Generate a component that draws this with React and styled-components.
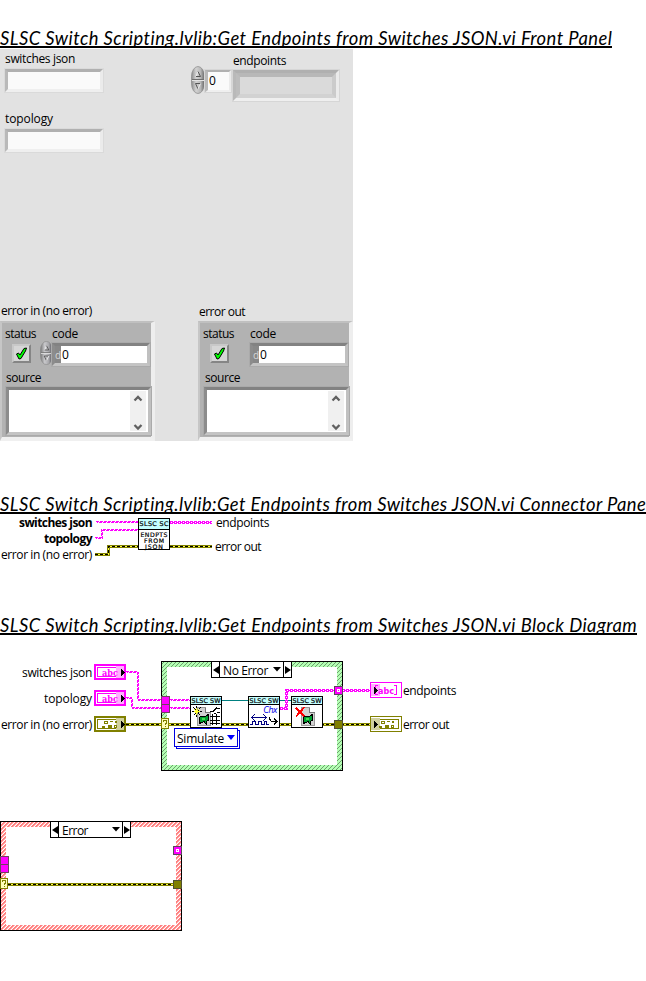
import React, { useLayoutEffect, useRef, useState } from "react";
import styled, { createGlobalStyle } from "styled-components";

const MAGENTA = "#ff00ff";
const OLIVE = "#808000";

const GlobalStyle = createGlobalStyle`
  * { box-sizing: border-box; }
  body { margin: 0; background: #fff; color: #000; }
`;

const Page = styled.main`
  width: 646px;
  height: 981px;
  overflow: hidden;
  background: #fff;
  font-family: "Open Sans", "Noto Sans", sans-serif;
  font-size: 12px;
  line-height: 18px;
`;

const Heading = styled.h2`
  width: ${(p) => p.$width}px;
  height: 21px;
  margin: ${(p) => p.$top}px 0 0;
  overflow: hidden;
  border-bottom: 2px solid #000;
  font: italic 400 18.4px/22px Lato, sans-serif;
  white-space: nowrap;
`;

const TextLine = styled.span`
  display: block;
  width: max-content;
  height: 16px;
  white-space: pre;
  font-weight: ${(p) => (p.$bold ? 700 : "inherit")};
`;

/* Tracks a line of text out or in so that it fills the given width. */
function Fit({ width, bold, children }) {
  const ref = useRef(null);
  const [spacing, setSpacing] = useState(0);
  useLayoutEffect(() => {
    const natural = ref.current.getBoundingClientRect().width;
    setSpacing((width - natural) / children.length);
  }, [width, children]);
  return (
    <TextLine ref={ref} $bold={bold} style={{ letterSpacing: spacing }}>
      {children}
    </TextLine>
  );
}

/* ---------- front panel ---------- */

const Panel = styled.section`
  width: 353px;
  height: 392px;
  margin-top: 1px;
  padding-top: 1px;
  background: #e2e2e2;
`;

const PanelTop = styled.div`
  display: flex;
  height: 252px;
`;

const InputColumn = styled.div`
  display: flex;
  flex-direction: column;
  width: 191px;
  padding-left: 4px;
`;

const Caption = styled.div`
  height: 16px;
  margin: ${(p) => p.$margin || "0"};
`;

const Sunken = styled.div`
  border: 4px solid;
  border-color: #b0b0b0 #ebebeb #efefef #b9b9b9;
  outline: 1px solid #d6d6d6;
  outline-offset: -1px;
  background: #fafafa;
`;

const TextInput = styled(Sunken)`
  width: 100px;
  height: 25px;
  outline-color: #dadada;
`;

const EndpointGroup = styled.div`
  padding-top: 2px;
`;

const ArrayRow = styled.div`
  display: flex;
  align-items: flex-start;
  margin-top: -2px;
`;

const IndexBox = styled(Sunken)`
  width: 28px;
  height: 24px;
  margin: 3px 0 0 -1px;
  padding: 0 0 0 1px;
  border-width: 3px 3px 3px 4px;
`;

const ArrayBox = styled(Sunken)`
  width: 108px;
  height: 33px;
  margin-top: 3px;
  background: #dadada;
`;

const ArrayElement = styled.div`
  height: 25px;
  border: 4px solid;
  border-color: #b8b8b8 #cbcbcb #d2d2d2 #bdbdbd;
`;

const ClusterRow = styled.div`
  display: flex;
  justify-content: space-between;
`;

const ClusterGroup = styled.div`
  width: 155px;
`;

const Cluster = styled.div`
  width: 155px;
  height: 120px;
  border: solid;
  border-width: 2px 4px 4px 2px;
  border-color: #c0c0c0 #eeeeee #f0f0f0 #c6c6c6;
  background: #b2b2b2;
`;

const ClusterFields = styled.div`
  display: flex;
  height: 46px;
`;

const StatusField = styled.div`
  width: 38px;
  padding: 2px 0 0 3px;
`;

const StatusLight = styled.div`
  display: flex;
  align-items: center;
  justify-content: center;
  width: 19px;
  height: 19px;
  margin: 3px 0 0 7px;
  border: 2px solid;
  border-color: #c8c8c8 #858585 #858585 #c8c8c8;
  background: #d6d6d6;
`;

const CodeField = styled.div`
  padding-top: 2px;
`;

const CodeRow = styled.div`
  display: flex;
  align-items: flex-start;
`;

const SpinnerSlot = styled.div`
  width: 11px;
  height: 24px;
`;

const DarkSunken = styled.div`
  border: 4px solid;
  border-color: #828282 #c0c0c0 #c4c4c4 #8c8c8c;
  outline: 1px solid #aaaaaa;
  outline-offset: -1px;
  background: #fff;
`;

const CodeBox = styled(DarkSunken)`
  display: flex;
  width: 100px;
  height: 25px;
  margin-top: 1px;
`;

const Radix = styled.span`
  width: 6px;
  background: #888;
  color: #d8d8d8;
  font-size: 10px;
`;

const CodeValue = styled.span`
  padding-left: 1px;
`;

const SourceBox = styled(DarkSunken)`
  display: flex;
  justify-content: flex-end;
  width: 147px;
  height: 50px;
  margin: 1px 0 0 3px;
  padding: 1px;
`;

const ScrollBar = styled.div`
  display: flex;
  flex-direction: column;
  justify-content: space-between;
  align-items: center;
  width: 16px;
  margin-right: 1px;
  padding: 4px 0 0;
  background: #f0f0f0;
`;

const Chevron = ({ down }) => (
  <svg width="10" height="7" viewBox="0 0 10 7">
    <path d={down ? "M1.5 1L5 4.5L8.5 1" : "M1.5 5.5L5 2L8.5 5.5"} fill="none" stroke="#606060" strokeWidth="2.3" />
  </svg>
);

const Spinner = ({ width, height, dark }) => (
  <svg width={width} height={height} viewBox="0 0 14 28" preserveAspectRatio="none">
    <defs>
      <linearGradient id={dark ? "spinDark" : "spinLight"}>
        <stop offset="0" stopColor={dark ? "#777" : "#8c8c8c"} />
        <stop offset=".35" stopColor={dark ? "#c9c9cc" : "#d2d2d2"} />
        <stop offset=".7" stopColor={dark ? "#a6a6aa" : "#b8b8b8"} />
        <stop offset="1" stopColor={dark ? "#45454d" : "#666"} />
      </linearGradient>
    </defs>
    <rect x=".5" y=".5" width="13" height="27" rx="6.5" ry="10" fill={`url(#${dark ? "spinDark" : "spinLight"})`} stroke="#888" strokeWidth=".7" />
    <path d="M1 13.5H13" stroke="#707070" />
    <path d="M1 14.5H13" stroke="#e4e4e4" />
    <path d="M5 10.5L7 5.5" fill="none" stroke="#eee" />
    <path d="M7 5.5L9.5 10.5H5" fill="none" stroke="#555" />
    <path d="M4.5 17.5L7 23M4.5 17.5H9.5" fill="none" stroke="#555" />
    <path d="M9.5 17.5L7 23" fill="none" stroke="#eee" />
  </svg>
);

const CheckMark = () => (
  <svg width="12" height="13" viewBox="0 0 12 13">
    <path d="M.5 7L2.500 6L4 8L8 1.500L10.500 1L9.500 4L5 11.500L3 12Z" fill="#00ff00" stroke="#000" />
  </svg>
);

function ErrorCluster({ caption, captionWidth, captionMargin, control, sourceIndent }) {
  return (
    <ClusterGroup>
      <Caption $margin={captionMargin}><Fit width={captionWidth}>{caption}</Fit></Caption>
      <Cluster>
        <ClusterFields>
          <StatusField>
            <Fit width={31}>status</Fit>
            <StatusLight><CheckMark /></StatusLight>
          </StatusField>
          <CodeField>
            <Caption $margin="0 0 0 12px"><Fit width={26}>code</Fit></Caption>
            <CodeRow>
              <SpinnerSlot>{control && <Spinner width={13} height={24} dark />}</SpinnerSlot>
              <CodeBox>
                <Radix>d</Radix>
                <CodeValue>0</CodeValue>
              </CodeBox>
            </CodeRow>
          </CodeField>
        </ClusterFields>
        <Caption $margin={`0 0 0 ${sourceIndent}px`}><Fit width={35}>source</Fit></Caption>
        <SourceBox>
          <ScrollBar><Chevron /><Chevron down /></ScrollBar>
        </SourceBox>
      </Cluster>
    </ClusterGroup>
  );
}

function FrontPanel() {
  return (
    <Panel>
      <PanelTop>
        <InputColumn>
          <Caption $margin="0 0 2px 1px"><Fit width={70}>switches json</Fit></Caption>
          <TextInput />
          <Caption $margin="17px 0 2px 1px"><Fit width={48}>topology</Fit></Caption>
          <TextInput />
        </InputColumn>
        <EndpointGroup>
          <Caption $margin="0 0 0 42px"><Fit width={53}>endpoints</Fit></Caption>
          <ArrayRow>
            <Spinner width={14} height={28} />
            <IndexBox>0</IndexBox>
            <ArrayBox><ArrayElement /></ArrayBox>
          </ArrayRow>
        </EndpointGroup>
      </PanelTop>
      <ClusterRow>
        <ErrorCluster caption="error in (no error)" captionWidth={91} captionMargin="0 0 3px 1px" sourceIndent={4} control />
        <ErrorCluster caption="error out" captionWidth={46} captionMargin="1px 0 2px 1px" sourceIndent={5} />
      </ClusterRow>
    </Panel>
  );
}

/* ---------- diagrams ---------- */

const Canvas = styled.section`
  position: relative;
  height: ${(p) => p.$height}px;
`;

const Drawing = styled.svg`
  position: absolute;
  left: 0;
  top: 0;
  shape-rendering: crispEdges;
`;

const Placed = styled.div`
  position: absolute;
  left: ${(p) => p.$x}px;
  top: ${(p) => p.$y}px;
  height: 16px;
`;

const HATCH = {
  green: { base: "#b4ffb4", line: "#6d9f6d", soft: "#b4ffb4" },
  red: { base: "#ff8080", line: "#ffffff", soft: "#ffb8b8" },
};

function CaseFrame({ x, y, tone }) {
  const { base, line, soft } = HATCH[tone];
  return (
    <g transform={`translate(${x} ${y})`}>
      <defs>
        <pattern id={`hatch-${tone}`} width="4" height="4" patternUnits="userSpaceOnUse">
          <rect width="4" height="4" fill={base} />
          <path d="M3 0h1v1h-1zM2 1h1v1h-1zM1 2h1v1h-1zM0 3h1v1h-1z" fill={line} />
          <path d="M2 0h1v1h-1zM1 1h1v1h-1zM0 2h1v1h-1zM3 3h1v1h-1z" fill={soft} />
        </pattern>
      </defs>
      <rect x=".5" y=".5" width="181" height="109" fill={`url(#hatch-${tone})`} stroke="#000" />
      <rect x="6" y="6" width="170" height="98" fill="#fff" />
    </g>
  );
}

const CaseSelector = styled.div`
  position: absolute;
  left: ${(p) => p.$x}px;
  top: ${(p) => p.$y}px;
  display: flex;
  align-items: center;
  width: 81px;
  height: 17px;
  border: 1px solid #000;
  background: #fff;
`;

const SelectorArrow = styled.span`
  display: flex;
  align-items: center;
  justify-content: center;
  width: 8px;
  height: 15px;
  border: 0 solid #000;
  border-width: ${(p) => (p.$right ? "0 0 0 1px" : "0 1px 0 0")};
`;

const SelectorText = styled.span`
  flex: 1;
  height: 16px;
  padding-left: 3px;
`;

const Ring = styled.div`
  position: absolute;
  left: 174px;
  top: 81px;
  display: flex;
  align-items: center;
  justify-content: space-between;
  width: 64px;
  height: 19px;
  padding: 0 2px;
  border: 1px solid #0000e0;
  background: #fff;
`;

const StringWire = ({ d }) => (
  <g fill="none" stroke={MAGENTA}>
    <path d={d} strokeDasharray="3 1" />
    <path d={d} strokeDasharray="3 1" strokeDashoffset="2" transform="translate(1 1)" />
  </g>
);

const ArrayWire = ({ d }) => (
  <g fill="none" stroke={MAGENTA}>
    <path d={d} strokeWidth="3" strokeDasharray="3 1" />
    <path d={d} />
    <path d={d} stroke="#fff" strokeDasharray="1 3" strokeDashoffset="-1" />
  </g>
);

const ErrorWire = ({ d }) => (
  <g fill="none">
    <path d={d} stroke={OLIVE} strokeWidth="3" />
    <path d={d} stroke="#ffff40" />
    <path d={d} stroke="#000" strokeDasharray="3 2" />
  </g>
);

function StringControl({ x, y }) {
  return (
    <g transform={`translate(${x} ${y})`}>
      <rect x="1" y="1" width="30" height="14" fill="#fff" stroke={MAGENTA} strokeWidth="2" />
      <rect x="3.5" y="3.5" width="25" height="9" fill="#fff" stroke={MAGENTA} />
      <rect x="22" y="2" width="8" height="12" fill="#ffb0ff" />
      <text x="8" y="11.5" fill={MAGENTA} fontFamily="DejaVu Serif, serif" fontWeight="700" fontSize="9" textLength="16" lengthAdjust="spacingAndGlyphs">abc</text>
      <path d="M27 5V12L30.500 8.500Z" fill="#000" />
    </g>
  );
}

const ClusterGlyph = ({ x, y }) => (
  <g transform={`translate(${x} ${y})`} fill={OLIVE}>
    <path d="M2 0H6V3H2ZM8 0H11V1H8ZM13 0H15V2H13ZM0 5H3V7H0ZM6 4H10V7H6ZM12 4H15V7H12Z" />
    <path d="M3 1H5V2H3ZM13 5H14V6H13Z" fill="#fff" />
  </g>
);

function ErrorControl({ x, y }) {
  return (
    <g transform={`translate(${x} ${y})`}>
      <rect x="1" y="1" width="30" height="14" fill="#fff" stroke={OLIVE} strokeWidth="2" />
      <rect x="3.500" y="3.500" width="25" height="9" fill="#fff" stroke={OLIVE} />
      <rect x="22" y="2" width="8" height="12" fill="#d0d0a0" />
      <ClusterGlyph x={8} y={5} />
      <path d="M27 5V12L30.500 8.500Z" fill="#000" />
    </g>
  );
}

function StringArrayIndicator({ x, y }) {
  return (
    <g transform={`translate(${x} ${y})`}>
      <rect x=".5" y=".5" width="31" height="15" fill="#fff" stroke={MAGENTA} />
      <rect x="1" y="2" width="9" height="12" fill="#ffb0ff" />
      <path d="M8 3.500H5.500V12.500H8M24 3.500H26.500V12.500H24" fill="none" stroke={MAGENTA} />
      <text x="8" y="11.500" fill={MAGENTA} fontFamily="DejaVu Sans, sans-serif" fontWeight="700" fontSize="9" textLength="16" lengthAdjust="spacingAndGlyphs">abc</text>
      <path d="M4 5V12L7.500 8.500Z" fill="#000" />
    </g>
  );
}

function ErrorIndicator({ x, y }) {
  return (
    <g transform={`translate(${x} ${y})`}>
      <rect x=".5" y=".5" width="31" height="15" fill="#fff" stroke={OLIVE} />
      <rect x="3.500" y="3.500" width="25" height="9" fill="#fff" stroke={OLIVE} />
      <rect x="1" y="2" width="9" height="12" fill="#d0d0a0" />
      <ClusterGlyph x={9} y={5} />
      <path d="M4 5V12L7.500 8.500Z" fill="#000" />
    </g>
  );
}

const NodeText = ({ x, y, width, size = 7, children }) => (
  <text x={x} y={y} fontFamily="DejaVu Sans, sans-serif" fontSize={size} textLength={width} lengthAdjust="spacing" stroke="#000" strokeWidth=".2">{children}</text>
);

function NodeIcon({ x, y, banner, bannerHeight = 7, children }) {
  return (
    <g transform={`translate(${x} ${y})`}>
      <rect x=".5" y=".5" width="31" height="31" fill="#fff" stroke="#000" />
      <rect x="1" y="1" width="30" height={bannerHeight} fill="#c4ffff" />
      <path d={`M0 ${bannerHeight + 1.5}H32`} stroke="#000" />
      <NodeText x={1.5} y={bannerHeight > 7 ? 8 : 7} width={29} size={6.4}>{banner}</NodeText>
      {children}
    </g>
  );
}

const Document = ({ x, y }) => (
  <g transform={`translate(${x} ${y})`}>
    <path d="M.5 .5H8.500L13.500 5.500V18.500H.5Z" fill="#d2d2d2" stroke="#999" />
    <path d="M8.500 .5V5.500H13.500" fill="#fff" stroke="#777" />
    <path d="M2.500 10.500L5 9L7 10L11.500 7.500V13L9 14.500V17L7 14.500L2.500 16.500Z" fill="#00a030" stroke="#000" />
    <path d="M5 11H8V13H5Z" fill="#40e050" />
  </g>
);

const OpenIcon = () => (
  <>
    <Document x={7} y={11} />
    <path d="M6.500 9.500V20.500M2 15.500H12M3.500 11.500L10.500 19.500M10.500 11.500L3.500 19.500" stroke="#000" />
    <path d="M6.500 11.500V18.500M3.500 15.500H9.500M4.500 13.500L8.500 17.500M8.500 13.500L4.500 17.500" stroke="#ffff30" />
    <path d="M20 15.500H23L27 11.500M27 12.500H30M27 16.500H30M24 17.500H26" stroke="#000" fill="none" />
    <path d="M20 20.500H30M20 24.500H30M22.500 18V29M26.500 18V29M20 27.500H30" stroke="#000" />
  </>
);

const ScanIcon = () => (
  <>
    <text x="15.500" y="17" fill="#0000e8" fontFamily="DejaVu Sans, sans-serif" fontStyle="italic" fontSize="8" textLength="14">Chx</text>
    <g fill="none" stroke="#000080">
      <path d="M4 21.500H18" strokeWidth="1" />
      <path d="M7 18L3.500 21.500L7 25M15 18L18.500 21.500L15 25" />
      <path d="M2 28.500H4.500V25.500H7.500V28.500H10.500V25.500H13.500V28.500H16.500V25.500H18.500V28.500H21" />
    </g>
    <path d="M21.500 21V23L23.500 25.500H29M26 22.500L29 25.500L26 28.500" fill="none" stroke="#000" />
  </>
);

const CloseIcon = () => (
  <>
    <Document x={10} y={11} />
    <path d="M5 12L13.500 20.500M13.500 11L5 20.500" stroke="#ff0000" strokeWidth="1.800" />
  </>
);

function InputTunnels({ x, y }) {
  return (
    <g transform={`translate(${x} ${y})`}>
      <rect x=".5" y=".5" width="8" height="16" fill={MAGENTA} stroke="#70405f" />
      <path d="M0 8.500H9" stroke="#70405f" />
      <rect x=".5" y="22.500" width="7" height="10" fill="#ffffb8" stroke={OLIVE} />
      <path d="M2.500 26V24.500H5.500V27L4.500 28V29M4.500 30V31" fill="none" stroke={OLIVE} />
    </g>
  );
}

function OutputTunnels({ x, y }) {
  return (
    <g transform={`translate(${x} ${y})`} stroke="#584858">
      <rect x=".5" y=".5" width="8" height="8" fill={MAGENTA} />
      <rect x="3.500" y="3.500" width="2" height="2" fill={MAGENTA} stroke="#fff" />
      <rect x=".5" y="34.500" width="8" height="8" fill={OLIVE} stroke="#505030" />
    </g>
  );
}

const Triangle = ({ d, width, height, fill = "#000" }) => (
  <svg width={width} height={height}><path d={d} fill={fill} /></svg>
);

function Selector({ x, y, text, width }) {
  return (
    <CaseSelector $x={x} $y={y}>
      <SelectorArrow><Triangle width={6} height={8} d="M6 0V8L0 4Z" /></SelectorArrow>
      <SelectorText><Fit width={width}>{text}</Fit></SelectorText>
      <Triangle width={10} height={5} d="M0 0H8L4 4.500Z" />
      <SelectorArrow $right><Triangle width={6} height={8} d="M0 0V8L6 4Z" /></SelectorArrow>
    </CaseSelector>
  );
}

const Label = ({ x, y, width, bold, children }) => (
  <Placed $x={x} $y={y}><Fit width={width} bold={bold}>{children}</Fit></Placed>
);

function ConnectorPane() {
  return (
    <Canvas $height={50}>
      <Drawing width="646" height="50" viewBox="0 514 646 50">
        <StringWire d="M96 521.5H138" />
        <StringWire d="M95 537.5H101.5V529.5H138" />
        <ErrorWire d="M95 554.5H108.5V546.5H138" />
        <ArrayWire d="M170 522.5H212" />
        <ErrorWire d="M170 546.5H212" />
        <NodeIcon x={138} y={518} banner="SLSC SC" bannerHeight={10}>
          <NodeText x={2.5} y={18.5} width={27} size={6.2}>ENDPTS</NodeText>
          <NodeText x={6} y={24.5} width={20} size={6.2}>FROM</NodeText>
          <NodeText x={7} y={30.5} width={18} size={6.2}>JSON</NodeText>
        </NodeIcon>
      </Drawing>
      <Label x={19} y={0} width={73} bold>switches json</Label>
      <Label x={44} y={16} width={48} bold>topology</Label>
      <Label x={1} y={32} width={91}>error in (no error)</Label>
      <Label x={216} y={0} width={53}>endpoints</Label>
      <Label x={215} y={24} width={46}>error out</Label>
    </Canvas>
  );
}

function BlockDiagram() {
  return (
    <Canvas $height={160}>
      <Drawing width="646" height="160" viewBox="0 647 646 160">
        <CaseFrame x={161} y={661} tone="green" />
        <StringWire d="M126 671.5H137.500V699.500H161" />
        <StringWire d="M126 697.500H131.500V707.500H161" />
        <StringWire d="M170 699.500H190" />
        <StringWire d="M170 707.500H190" />
        <ErrorWire d="M126 724.500H370" />
        <path d="M222 700.500H291" stroke="#008080" />
        <ArrayWire d="M280 708.500H286.500V690.500H370" />
        <StringControl x={94} y={664} />
        <StringControl x={94} y={690} />
        <ErrorControl x={94} y={716} />
        <InputTunnels x={161} y={696} />
        <OutputTunnels x={334} y={686} />
        <NodeIcon x={190} y={696} banner="SLSC SW"><OpenIcon /></NodeIcon>
        <NodeIcon x={248} y={696} banner="SLSC SW"><ScanIcon /></NodeIcon>
        <NodeIcon x={291} y={696} banner="SLSC SW"><CloseIcon /></NodeIcon>
        <StringArrayIndicator x={370} y={682} />
        <ErrorIndicator x={370} y={716} />
        <path d="M176 748.500H239.500V730.500H238M176.500 747V749" fill="none" stroke="#0000e0" />
      </Drawing>
      <Selector x={211} y={14} text="No Error" width={45} />
      <Ring>
        <Fit width={47}>Simulate</Fit>
        <Triangle width={8} height={5} d="M0 0H8L4 5Z" fill="#0000ff" />
      </Ring>
      <Label x={22} y={17} width={70}>switches json</Label>
      <Label x={44} y={43} width={48}>topology</Label>
      <Label x={1} y={69} width={91}>error in (no error)</Label>
      <Label x={403} y={35} width={53}>endpoints</Label>
      <Label x={403} y={69} width={46}>error out</Label>
    </Canvas>
  );
}

function ErrorCase() {
  return (
    <Canvas $height={140}>
      <Drawing width="646" height="140" viewBox="0 807 646 140">
        <CaseFrame x={0} y={821} tone="red" />
        <ErrorWire d="M8 884.500H174" />
        <InputTunnels x={0} y={856} />
        <OutputTunnels x={173} y={846} />
      </Drawing>
      <Selector x={50} y={14} text="Error" width={26} />
    </Canvas>
  );
}

const TITLE = "SLSC Switch Scripting.lvlib:Get Endpoints from Switches JSON.vi";

const Spacer = styled.div`
  height: 12px;
`;

export default function App() {
  return (
    <>
      <GlobalStyle />
      <Page>
        <Heading $top={27} $width={612}><Fit width={612}>{`${TITLE} Front Panel`}</Fit></Heading>
        <FrontPanel />
        <Heading $top={52} $width={646}><Fit width={646}>{`${TITLE} Connector Pane`}</Fit></Heading>
        <ConnectorPane />
        <Heading $top={50} $width={637}><Fit width={637}>{`${TITLE} Block Diagram`}</Fit></Heading>
        <Spacer />
        <BlockDiagram />
        <ErrorCase />
      </Page>
    </>
  );
}
